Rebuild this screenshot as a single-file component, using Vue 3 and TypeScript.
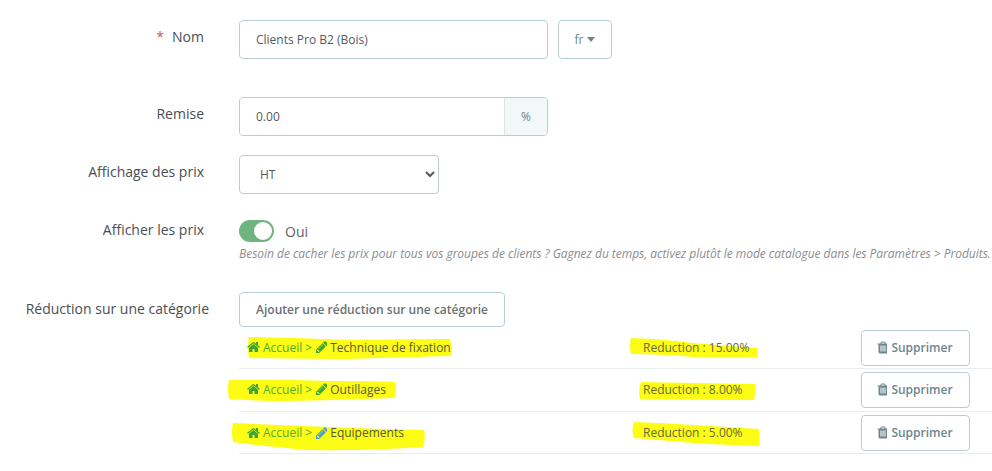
<template>
  <form class="form" @submit.prevent>
    <div class="field field-name">
      <label class="label"><span class="required">*</span>Nom</label>
      <div class="controls">
        <input class="input name-input" type="text" value="Clients Pro B2 (Bois)" />
        <button class="lang-btn" type="button">fr<span class="caret"></span></button>
      </div>
    </div>

    <div class="field field-discount">
      <label class="label">Remise</label>
      <div class="input-group">
        <input class="input group-input" type="text" value="0.00" />
        <span class="addon">%</span>
      </div>
    </div>

    <div class="field field-price">
      <label class="label">Affichage des prix</label>
      <select class="input price-select">
        <option>HT</option>
        <option>TTC</option>
      </select>
    </div>

    <div class="field field-show">
      <label class="label">Afficher les prix</label>
      <div class="show-body">
        <div class="switch-line">
          <span class="switch"><span class="knob"></span></span>
          <span class="switch-text">Oui</span>
        </div>
        <p class="help">Besoin de cacher les prix pour tous vos groupes de clients ? Gagnez du temps, activez plutôt le mode catalogue dans les Paramètres &gt; Produits.</p>
      </div>
    </div>

    <div class="field field-category">
      <label class="label label-wide">Réduction sur une catégorie</label>
      <div class="category-body">
        <button class="add-btn" type="button">Ajouter une réduction sur une catégorie</button>
        <div v-for="row in rows" :key="row.name" class="cat-row" :style="{ height: row.height + 'px' }">
          <svg class="marker" width="753" :height="row.height" :viewBox="`0 0 753 ${row.height}`">
            <path :d="row.markLeft" fill="#fcfc14" />
            <path :d="row.markRight" fill="#fcfc14" />
          </svg>
          <div class="cat-path">
            <svg class="icon" width="13" height="14" viewBox="0 0 1664 1792"><path fill="#3ba53a" :d="homeIcon" /></svg>
            <span class="crumb">Accueil &gt;</span>
            <svg class="icon pencil" width="12" height="14" viewBox="0 0 1536 1792"><path :fill="row.pencil" :d="pencilIcon" /></svg>
            <span class="cat-name">{{ row.name }}</span>
          </div>
          <div class="cat-discount">Reduction : {{ row.discount }}</div>
          <button class="del-btn" type="button">
            <svg width="11" height="15" viewBox="0 0 1408 1792"><path fill="#6c868e" :d="trashIcon" /></svg>
            Supprimer
          </button>
        </div>
      </div>
    </div>
  </form>
</template>

<script setup lang="ts">
interface CategoryRow {
  name: string
  discount: string
  height: number
  pencil: string
  markLeft: string
  markRight: string
}

const homeIcon = 'M1408 992v480q0 26-19 45t-45 19h-384v-384h-256v384h-384q-26 0-45-19t-19-45v-480q0-1 .5-3t.5-3l575-474 575 474q1 2 1 6zm223-69l-62 74q-8 9-21 11h-3q-13 0-21-7l-692-577-692 577q-12 8-24 7-13-2-21-11l-62-74q-8-10-7-23.5t11-21.5l719-599q32-26 76-26t76 26l244 204v-195q0-14 9-23t23-9h192q14 0 23 9t9 23v408l219 182q10 8 11 21.5t-7 23.5z'
const pencilIcon = 'M491 1536l91-91-235-235-91 91v107h128v128h107zm523-928q0-22-22-22-10 0-17 7l-542 542q-7 7-7 17 0 22 22 22 10 0 17-7l542-542q7-7 7-17zm-54-192l416 416-832 832h-416v-416zm683 96q0 53-37 90l-166 166-416-416 166-165q36-38 90-38 53 0 91 38l235 234q37 39 37 91z'
const trashIcon = 'M704 1376v-704q0-14-9-23t-23-9h-64q-14 0-23 9t-9 23v704q0 14 9 23t23 9h64q14 0 23-9t9-23zm256 0v-704q0-14-9-23t-23-9h-64q-14 0-23 9t-9 23v704q0 14 9 23t23 9h64q14 0 23-9t9-23zm256 0v-704q0-14-9-23t-23-9h-64q-14 0-23 9t-9 23v704q0 14 9 23t23 9h64q14 0 23-9t9-23zm-544-992h448l-48-117q-7-9-17-11h-317q-10 2-17 11zm928 32v64q0 14-9 23t-23 9h-96v948q0 83-47 143.5t-113 60.5h-832q-66 0-113-58.5t-47-141.5v-952h-96q-14 0-23-9t-9-23v-64q0-14 9-23t23-9h309l70-167q15-37 54-63t79-26h320q40 0 79 26t54 63l70 167h309q14 0 23 9t9 23z'

// marker strokes are drawn in row coordinates (row starts at x=239)
const rows: CategoryRow[] = [
  {
    name: 'Technique de fixation',
    discount: '15.00%',
    height: 41,
    pencil: '#3ba53a',
    markLeft: 'M10 9 Q60 10 110 12 Q170 11 211 11 Q213 19 212 28 Q170 29 110 31 Q60 31 10 30 Q8 20 10 9Z',
    markRight: 'M392 10 Q425 11 454 15 Q490 18 518 20 Q519 25 518 29 Q485 30 454 29 Q420 26 392 26 Q390 18 392 10Z'
  },
  {
    name: 'Outillages',
    discount: '8.00%',
    height: 43,
    pencil: '#3ba53a',
    markLeft: 'M-10 11 Q40 10 90 12 Q130 12 156 13 Q158 21 156 29 Q100 31 50 32 Q15 32 -10 30 Q-12 20 -10 11Z',
    markRight: 'M402 13 Q450 14 516 15 Q517 22 515 31 Q460 31 401 30 Q399 21 402 13Z'
  },
  {
    name: 'Equipements',
    discount: '5.00%',
    height: 42,
    pencil: '#4aa3cf',
    markLeft: 'M-6 11 Q40 13 90 15 Q140 17 185 18 Q187 26 184 35 Q120 39 70 38 Q20 34 -6 30 Q-8 20 -6 11Z',
    markRight: 'M395 10 Q425 11 454 13 Q490 15 520 17 Q521 26 520 34 Q485 33 454 31 Q420 28 395 26 Q392 18 395 10Z'
  }
]
</script>

<style>
body {
  background: #fff;
  overflow: hidden;
}
</style>

<style scoped>
.form {
  width: 992px;
  height: 471px;
  padding-top: 20px;
  box-sizing: border-box;
  font-family: "Open Sans", "Liberation Sans", sans-serif;
  font-size: 14px;
  color: #363a41;
  overflow: hidden;
}

.field {
  display: flex;
  align-items: flex-start;
}

.field-discount {
  margin-top: 38px;
}

.field-price {
  margin-top: 19px;
}

.field-show {
  margin-top: 26px;
}

.field-category {
  margin-top: 30px;
}

.label {
  flex: 0 0 204px;
  width: 204px;
  margin-right: 35px;
  padding-top: 7px;
  text-align: right;
  line-height: 20px;
  color: #4a4e54;
  white-space: nowrap;
}

.label-wide {
  position: relative;
  left: 5px;
}

.field-show .label {
  padding-top: 0;
}

.required {
  margin-right: 8px;
  color: #c05c67;
}

.controls {
  display: flex;
  gap: 10px;
}

.input {
  height: 39px;
  box-sizing: border-box;
  border: 1px solid #bbcdd2;
  border-radius: 4px;
  padding: 0 16px;
  background: #fff;
  font: 12px "Open Sans", "Liberation Sans", sans-serif;
  color: #55595f;
  outline: none;
}

.name-input {
  width: 309px;
}

.lang-btn {
  width: 54px;
  height: 39px;
  border: 1px solid #bbcdd2;
  border-radius: 4px;
  background: #fff;
  font: 12px "Open Sans", "Liberation Sans", sans-serif;
  color: #6c868e;
  padding: 0;
}

.caret {
  display: inline-block;
  margin-left: 4px;
  vertical-align: 2px;
  border-top: 5px solid #6c868e;
  border-left: 4px solid transparent;
  border-right: 4px solid transparent;
}

.input-group {
  display: flex;
  width: 309px;
  height: 39px;
  box-sizing: border-box;
  border: 1px solid #bbcdd2;
  border-radius: 4px;
  overflow: hidden;
}

.group-input {
  flex: 1;
  min-width: 0;
  height: 37px;
  border: 0;
  border-radius: 0;
}

.addon {
  width: 42px;
  display: flex;
  align-items: center;
  justify-content: center;
  border-left: 1px solid #dbe6e9;
  background: #f4f7f8;
  font-size: 12px;
  color: #6c868e;
}

.price-select {
  width: 200px;
  color: #55595f;
}

.show-body {
  min-width: 0;
}

.switch-line {
  display: flex;
  align-items: center;
  height: 22px;
}

.switch {
  position: relative;
  display: block;
  width: 35px;
  height: 22px;
  border-radius: 11px;
  background: #70b580;
}

.knob {
  position: absolute;
  top: 2px;
  right: 2px;
  width: 18px;
  height: 18px;
  border-radius: 50%;
  background: #fff;
}

.switch-text {
  margin-left: 11px;
  font-size: 14px;
  color: #5d6167;
}

.help {
  margin: 4px 0 0 0;
  line-height: 16px;
  font-size: 12px;
  font-style: italic;
  letter-spacing: -0.025px;
  color: #8a8d90;
  white-space: nowrap;
}

.category-body {
  width: 753px;
}

.add-btn {
  display: block;
  width: 266px;
  height: 35px;
  border: 1px solid #bbcdd2;
  border-radius: 4px;
  background: #fff;
  padding: 0;
  font: 600 12px "Open Sans", "Liberation Sans", sans-serif;
  color: #6c6f74;
}

.cat-row {
  position: relative;
  display: flex;
  align-items: center;
  box-sizing: border-box;
  border-bottom: 1px solid #e8eded;
  font-size: 12px;
}

.cat-row:first-of-type {
  margin-top: 1px;
}

.marker {
  position: absolute;
  left: 0;
  top: 0;
  overflow: visible;
}

.cat-path {
  position: relative;
  display: flex;
  align-items: center;
  width: 396px;
  margin-left: 8px;
  padding-bottom: 2px;
}

.icon {
  margin-right: 3px;
}

.pencil {
  margin: 0 3px 0 3px;
}

.crumb {
  color: #4fae34;
}

.cat-name {
  color: #565a3c;
}

.cat-discount {
  position: relative;
  width: 218px;
  padding-bottom: 2px;
  color: #676a42;
}

.del-btn {
  position: relative;
  display: flex;
  align-items: center;
  justify-content: center;
  gap: 4px;
  width: 109px;
  height: 36px;
  border: 1px solid #bbcdd2;
  border-radius: 4px;
  background: #fff;
  padding: 0 2px 2px 0;
  font: 600 12px "Open Sans", "Liberation Sans", sans-serif;
  color: #6c868e;
}

.cat-row:last-child .cat-path,
.cat-row:last-child .cat-discount,
.cat-row:last-child .del-btn {
  padding-bottom: 0;
}
</style>
